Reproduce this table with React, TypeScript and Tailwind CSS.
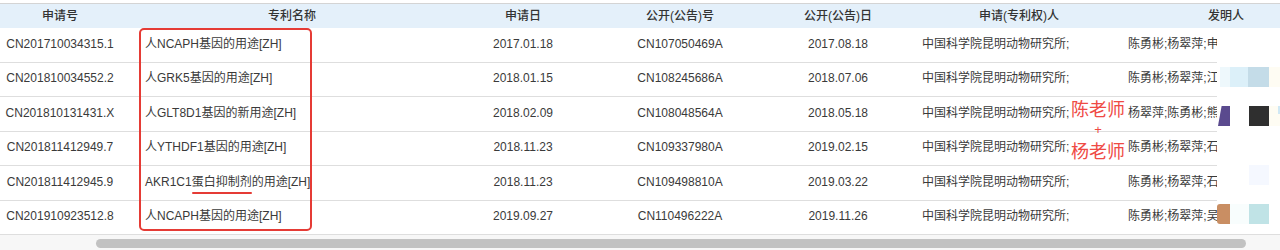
import React from 'react';

type Row = {
  no: string;
  name: React.ReactNode;
  date: string;
  pubNo: string;
  pubDate: string;
  applicant: string;
  inventor: string;
  h: string;
};

const rows: Row[] = [
  { no: 'CN201710034315.1', name: '人NCAPH基因的用途[ZH]', date: '2017.01.18', pubNo: 'CN107050469A', pubDate: '2017.08.18', applicant: '中国科学院昆明动物研究所;', inventor: '陈勇彬;杨翠萍;申', h: 'h-[35px]' },
  { no: 'CN201810034552.2', name: '人GRK5基因的用途[ZH]', date: '2018.01.15', pubNo: 'CN108245686A', pubDate: '2018.07.06', applicant: '中国科学院昆明动物研究所;', inventor: '陈勇彬;杨翠萍;江', h: 'h-[34px]' },
  { no: 'CN201810131431.X', name: '人GLT8D1基因的新用途[ZH]', date: '2018.02.09', pubNo: 'CN108048564A', pubDate: '2018.05.18', applicant: '中国科学院昆明动物研究所;', inventor: '杨翠萍;陈勇彬;熊', h: 'h-[35px]' },
  { no: 'CN201811412949.7', name: '人YTHDF1基因的用途[ZH]', date: '2018.11.23', pubNo: 'CN109337980A', pubDate: '2019.02.15', applicant: '中国科学院昆明动物研究所;', inventor: '陈勇彬;杨翠萍;石', h: 'h-[34px]' },
  {
    no: 'CN201811412945.9',
    name: (
      <>
        AKR1C1
        <span className="relative">
          蛋白抑制剂
          <span className="absolute left-0 right-0 -bottom-[3px] h-[2px] rounded-full bg-[#e53b35]" />
        </span>
        的用途[ZH]
      </>
    ),
    date: '2018.11.23',
    pubNo: 'CN109498810A',
    pubDate: '2019.03.22',
    applicant: '中国科学院昆明动物研究所;',
    inventor: '陈勇彬;杨翠萍;石',
    h: 'h-[35px]',
  },
  { no: 'CN201910923512.8', name: '人NCAPH基因的用途[ZH]', date: '2019.09.27', pubNo: 'CN110496222A', pubDate: '2019.11.26', applicant: '中国科学院昆明动物研究所;', inventor: '陈勇彬;杨翠萍;吴', h: 'h-[34px]' },
];

const cols = 'grid grid-cols-[120px_344px_118px_196px_120px_226px_204px] w-[1328px]';

export default function App() {
  return (
    <div className="w-[1280px] h-[250px] overflow-hidden bg-white font-['Liberation_Sans','Noto_Sans_CJK_SC',sans-serif] text-[12px] text-[#333]">
      <div className="relative pt-[3px]">
        {/* header */}
        <div className={`${cols} h-[25px] border-t border-[#d4d4d4] bg-[#e4f0fa] font-medium text-[#333]`}>
          <div className="flex items-center justify-center">申请号</div>
          <div className="flex items-center justify-center">专利名称</div>
          <div className="flex items-center justify-center">申请日</div>
          <div className="flex items-center justify-center">公开(公告)号</div>
          <div className="flex items-center justify-center">公开(公告)日</div>
          <div className="flex items-center justify-center pl-[16px]">申请(专利权)人</div>
          <div className="flex items-center justify-center">发明人</div>
        </div>

        {/* body */}
        {rows.map((r) => (
          <div key={r.no} className={`${cols} ${r.h} border-b border-[#dedede] text-[#3a3a3a]`}>
            <div className="flex items-center justify-center pb-[3px]">{r.no}</div>
            <div className="flex items-center pl-[25px] pb-[3px] whitespace-nowrap">{r.name}</div>
            <div className="flex items-center justify-center pb-[3px]">{r.date}</div>
            <div className="flex items-center justify-center pb-[3px]">{r.pubNo}</div>
            <div className="flex items-center justify-center pb-[3px]">{r.pubDate}</div>
            <div className="flex items-center pl-[24px] pb-[3px] whitespace-nowrap">{r.applicant}</div>
            <div className="flex items-center pl-[4px] pb-[3px] whitespace-nowrap overflow-hidden">{r.inventor}</div>
          </div>
        ))}

        {/* red box around patent names */}
        <div className="absolute left-[139px] top-[28px] w-[173px] h-[203px] rounded-[5px] border-2 border-[#e53b35] pointer-events-none" />

        {/* handwritten note */}
        <div className="absolute left-[1071px] top-[95px] flex flex-col items-center text-[18px] leading-[27px] text-[#ef4a44] font-['Noto_Sans_CJK_SC',sans-serif]">
          <span>陈老师</span>
          <span className="font-['Liberation_Sans',sans-serif] text-[13px] leading-[15px]">+</span>
          <span>杨老师</span>
        </div>

        {/* blurred-out right edge */}
        <div className="absolute left-[1217px] top-[28px] w-[63px] h-[206px] bg-white">
          <div className="absolute left-[3px] top-[39px] w-[12px] h-[20px] bg-[#eef8fc]" />
          <div className="absolute left-[13px] top-[39px] w-[18px] h-[20px] bg-[#dcf0f9]" />
          <div className="absolute left-[31px] top-[39px] w-[21px] h-[20px] bg-[#c4dce8]" />
          <div className="absolute left-[52px] top-[39px] w-[11px] h-[20px] bg-[#fefcf3]" />
          <div className="absolute left-[1px] top-[78px] w-[12px] h-[20px] bg-[#5a4a8e] [clip-path:polygon(30%_0,100%_0,100%_100%,0_100%)]" />
          <div className="absolute left-[32px] top-[78px] w-[20px] h-[20px] bg-[#2f2f2f]" />
          <div className="absolute left-[52px] top-[78px] w-[11px] h-[20px] bg-[#fefcf3]" />
          <div className="absolute left-[61px] top-[78px] w-[2px] h-[8px] bg-[#cfe8f5]" />
          <div className="absolute left-[32px] top-[137px] w-[20px] h-[20px] bg-[#f5f8ff]" />
          <div className="absolute left-[0px] top-[176px] w-[13px] h-[20px] rounded-l-[3px] bg-[#c98e63]" />
          <div className="absolute left-[13px] top-[176px] w-[19px] h-[20px] bg-[#f8fdfd]" />
          <div className="absolute left-[32px] top-[176px] w-[20px] h-[20px] bg-[#c0e3e6]" />
        </div>
      </div>

      {/* horizontal scrollbar */}
      <div className="h-[16px] bg-[#f7f7f7] pt-[4px]">
        <div className="ml-[96px] w-[1150px] h-[9px] rounded-full bg-[#c2c2c2]" />
      </div>
    </div>
  );
}
